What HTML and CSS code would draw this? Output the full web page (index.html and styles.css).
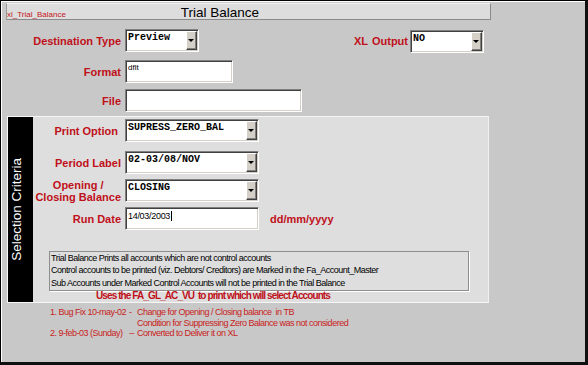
FILE: index.html
```html
<!DOCTYPE html>
<html>
<head>
<meta charset="utf-8">
<link rel="stylesheet" href="styles.css">
</head>
<body>
<div class="window">
  <div class="titlebar">
    <span class="form-name">xl_Trial_Balance</span>
    <span class="title">Trial Balance</span>
  </div>

  <div class="top-form">
    <div class="row row-dest">
      <span class="lbl">Destination Type</span>
      <div class="select w-dest"><span class="val">Preview</span><span class="btn"></span></div>
      <span class="lbl lbl-xl">XL Output</span>
      <div class="select w-xl"><span class="val">NO</span><span class="btn"></span></div>
    </div>
    <div class="row row-format">
      <span class="lbl">Format</span>
      <div class="input w-format"><span class="small-val">dflt</span></div>
    </div>
    <div class="row row-file">
      <span class="lbl">File</span>
      <div class="input w-file"></div>
    </div>
  </div>

  <div class="panel">
    <div class="strip"><span class="strip-text">Selection Criteria</span></div>
    <div class="pbody">
      <div class="row prow prow-print">
        <span class="lbl plbl lbl-print">Print Option</span>
        <div class="select w-panel"><span class="val">SUPRESS_ZERO_BAL</span><span class="btn"></span></div>
      </div>
      <div class="row prow prow-period">
        <span class="lbl plbl">Period Label</span>
        <div class="select w-panel"><span class="val">02-03/08/NOV</span><span class="btn"></span></div>
      </div>
      <div class="row prow prow-open">
        <span class="lbl plbl"><span class="two-line">Opening /<br>Closing Balance</span></span>
        <div class="select w-panel"><span class="val">CLOSING</span><span class="btn"></span></div>
      </div>
      <div class="row prow prow-run">
        <span class="lbl plbl">Run Date</span>
        <div class="input w-panel"><span class="date-val">14/03/2003</span><span class="caret"></span></div>
        <span class="hint">dd/mm/yyyy</span>
      </div>
      <div class="info">
        <div>Trial Balance Prints all accounts which are not control accounts</div>
        <div>Control accounts to be printed (viz. Debtors/ Creditors) are Marked in the Fa_Account_Master</div>
        <div>Sub Accounts under Marked Control Accounts will not be printed in the Trial Balance</div>
      </div>
      <div class="uses">Uses the FA_GL_AC_VU&nbsp; to print which will select Accounts</div>
    </div>
  </div>

  <div class="notes">
    <span>1. Bug Fix 10-may-02</span><span>-</span><span>Change for Opening / Closing balance&nbsp; in TB</span>
    <span></span><span></span><span>Condition for Suppressing Zero Balance was not considered</span>
    <span>2. 9-feb-03 (Sunday)</span><span>--</span><span>Converted to Deliver it on XL</span>
  </div>
</div>
</body>
</html>
```

FILE: styles.css
```css
html, body {
  margin: 0;
  padding: 0;
  background: #c8c8c8;
}

body {
  font-family: "Liberation Sans", Arial, sans-serif;
}

.window {
  width: 588px;
  height: 365px;
  box-sizing: border-box;
  background: #c8c8c8;
  border-top: 1px solid #000;
  border-left: 1px solid #000;
  border-right: 3px solid #101010;
  border-bottom: 3px solid #101010;
  box-shadow: inset 1px 1px 0 #ffffff;
  overflow: hidden;
}

/* title bar */
.titlebar {
  margin: 2px 0 0 5px;
  width: 485px;
  height: 17px;
  box-sizing: border-box;
  background: #dddddd;
  border-top: 1px solid #f2f2f2;
  border-left: 1px solid #9a9a9a;
  border-right: 1px solid #8a8a8a;
  border-bottom: 1px solid #8a8a8a;
  display: flex;
  align-items: baseline;
  padding-top: 1px;
  overflow: hidden;
}

.form-name {
  font-size: 8px;
  color: #c4161c;
  line-height: 15px;
}

.title {
  font-size: 13.5px;
  line-height: 15px;
  color: #000;
  margin-left: 115px;
}

/* rows */
.top-form {
  padding-top: 9px;
}

.row {
  display: flex;
  align-items: center;
  height: 23px;
}

.row-format {
  margin-top: 8px;
}

.row-file {
  margin-top: 6px;
}

.lbl {
  flex: none;
  width: 120px;
  margin-right: 4px;
  text-align: right;
  font-weight: bold;
  font-size: 11px;
  color: #c0101a;
  white-space: nowrap;
}

.lbl-xl {
  width: 209px;
  margin-right: 2px;
  word-spacing: 1px;
}

/* select boxes */
.select, .input {
  flex: none;
  height: 23px;
  box-sizing: border-box;
  background: #fff;
  border: 1px solid;
  border-color: #808080 #ffffff #ffffff #808080;
  box-shadow: inset 1px 1px 0 #404040, inset -1px -1px 0 #d4d0c8;
  padding: 1px;
}

.select {
  display: flex;
  align-items: stretch;
}

.w-dest { width: 74px; }
.w-xl { width: 74px; margin-top: 2px; }
.w-format { width: 108px; }
.w-file { width: 177px; }
.w-panel { width: 134px; }

.val {
  flex: 1;
  font-family: "Liberation Mono", "Courier New", monospace;
  font-weight: bold;
  font-size: 10px;
  line-height: 12px;
  padding: 1px 0 0 1px;
  color: #000;
  white-space: nowrap;
  overflow: hidden;
}

.btn {
  flex: none;
  width: 11px;
  box-sizing: border-box;
  background: #d4d0c8;
  border: 1px solid;
  border-color: #ffffff #404040 #404040 #ffffff;
  box-shadow: inset -1px -1px 0 #808080;
  display: flex;
  align-items: center;
  justify-content: center;
}

.btn::after {
  content: "";
  width: 0;
  height: 0;
  border-left: 3px solid transparent;
  border-right: 3px solid transparent;
  border-top: 3px solid #000;
  margin-left: -1px;
}

.input {
  display: flex;
  align-items: flex-start;
}

.small-val {
  font-size: 8px;
  line-height: 10px;
  padding: 1px 0 0 1px;
  color: #000;
}

.date-val {
  font-size: 9px;
  letter-spacing: -0.3px;
  line-height: 11px;
  padding: 2px 0 0 1px;
  color: #000;
}

.caret {
  width: 1px;
  height: 10px;
  margin-top: 2px;
  margin-left: 1px;
  background: #000;
}

/* selection panel */
.panel {
  margin: 4px 0 0 6px;
  width: 482px;
  height: 187px;
  box-sizing: border-box;
  background: #dedede;
  border: 1px solid #f6f6f6;
  border-right-color: #f0f0f0;
  display: flex;
}

.strip {
  flex: none;
  width: 25px;
  background: #000;
  display: flex;
  align-items: center;
  justify-content: flex-start;
  padding-left: 1px;
  box-sizing: border-box;
}

.strip-text {
  writing-mode: vertical-rl;
  transform: rotate(180deg);
  color: #fff;
  font-size: 13.5px;
  line-height: 15px;
  white-space: nowrap;
}

.pbody {
  flex: 1;
  display: flex;
  flex-direction: column;
}

.plbl {
  width: 88px;
}

.lbl-print {
  width: 85px;
  margin-right: 7px;
}

.prow-print { margin-top: 2px; }
.prow-period { margin-top: 9px; }
.prow-open { margin-top: 5px; }
.prow-run { margin-top: 5px; }

.two-line {
  display: inline-block;
  text-align: center;
  line-height: 12px;
}

.hint {
  margin-left: 11px;
  font-weight: bold;
  font-size: 11px;
  color: #c0101a;
}

.info {
  margin: 21px 0 0 16px;
  width: 420px;
  height: 40px;
  box-sizing: border-box;
  border: 1px solid #8e8e8e;
  box-shadow: 1px 1px 0 #ffffff;
  padding: 0 0 0 1px;
  font-size: 9px;
  letter-spacing: -0.5px;
  line-height: 12.3px;
  color: #000;
  white-space: nowrap;
}

.uses {
  margin: 0 0 0 63px;
  font-weight: bold;
  font-size: 10px;
  letter-spacing: -0.9px;
  line-height: 10px;
  color: #c0101a;
  white-space: nowrap;
}

/* notes */
.notes {
  margin: 4px 0 0 49px;
  display: grid;
  grid-template-columns: 79px 8px auto;
  font-size: 9px;
  letter-spacing: -0.5px;
  line-height: 10.5px;
  color: #c82222;
  white-space: nowrap;
}
```
